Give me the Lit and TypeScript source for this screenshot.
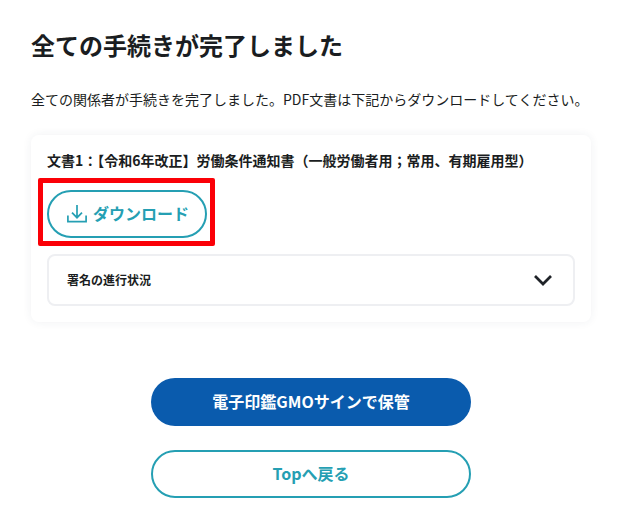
import { LitElement, html, css } from "lit";
import { customElement } from "lit/decorators.js";

@customElement("app-root")
export class AppRoot extends LitElement {
  static styles = css`
    :host {
      display: block;
      width: 619px;
      height: 513px;
      overflow: hidden;
      background: #fff;
      color: #1a1d21;
      font-family: "Noto Sans CJK JP", "Noto Sans", sans-serif;
    }
    .page {
      display: flex;
      flex-direction: column;
      padding: 27px 28px 0 31px;
    }
    h1 {
      margin: 0;
      font-size: 24px;
      font-weight: 700;
      line-height: 36px;
    }
    .lead {
      margin: 26px 0 0;
      font-size: 14px;
      line-height: 20px;
      white-space: nowrap;
    }
    .card {
      position: relative;
      margin-top: 26px;
      padding: 15px 16px 16px;
      border-radius: 8px;
      background: #fff;
      box-shadow: 0 0 10px rgba(40, 50, 90, 0.07);
      display: flex;
      flex-direction: column;
      align-items: flex-start;
    }
    .doc {
      margin: 0;
      font-size: 14px;
      font-weight: 700;
      line-height: 20px;
      white-space: nowrap;
    }
    .btn {
      box-sizing: border-box;
      display: flex;
      align-items: center;
      justify-content: center;
      border-radius: 24px;
      font-size: 16px;
      font-weight: 700;
      height: 48px;
      font-family: inherit;
    }
    .btn span,
    .acc span {
      padding-bottom: 2px;
    }
    .outline {
      border: 2px solid #259fb3;
      color: #259fb3;
      background: #fff;
    }
    .dl {
      width: 160px;
      margin-top: 20px;
      gap: 6px;
      padding-left: 2px;
    }
    .dl svg {
      width: 20px;
      height: 20px;
      display: block;
    }
    .mark {
      position: absolute;
      left: 7px;
      top: 43px;
      width: 177px;
      height: 68px;
      box-sizing: border-box;
      border: 5px solid #fb0007;
      border-radius: 2px;
    }
    .acc {
      box-sizing: border-box;
      align-self: stretch;
      margin-top: 16px;
      height: 52px;
      border: 2px solid #eeeff2;
      border-radius: 8px;
      display: flex;
      align-items: center;
      justify-content: space-between;
      padding: 0 20px 0 18px;
      font-size: 12px;
      font-weight: 700;
    }
    .acc svg {
      width: 20px;
      height: 12px;
      display: block;
    }
    .actions {
      display: flex;
      flex-direction: column;
      align-items: center;
      gap: 24px;
      margin-top: 56px;
    }
    .actions .btn {
      width: 320px;
    }
    .primary {
      background: #0a5bad;
      color: #fff;
    }
  `;

  render() {
    return html`
      <div class="page">
        <h1>全ての手続きが完了しました</h1>
        <p class="lead">全ての関係者が手続きを完了しました。PDF文書は下記からダウンロードしてください。</p>
        <section class="card">
          <p class="doc">文書1：【令和6年改正】労働条件通知書（一般労働者用；常用、有期雇用型）</p>
          <div class="btn outline dl">
            <svg viewBox="0 0 20 20" fill="none" stroke="currentColor" stroke-width="1.7">
              <path d="M0.9 11.5v6.2h18.2v-6.2" />
              <path d="M10 1v12.5M5 8.7l5 5 5-5" />
            </svg>
            <span>ダウンロード</span>
          </div>
          <div class="acc">
            <span>署名の進行状況</span>
            <svg viewBox="0 0 20 12" fill="none" stroke="#1f2328" stroke-width="2.7">
              <path d="M2 2l8 8 8-8" />
            </svg>
          </div>
          <div class="mark"></div>
        </section>
        <div class="actions">
          <div class="btn primary"><span>電子印鑑GMOサインで保管</span></div>
          <div class="btn outline"><span>Topへ戻る</span></div>
        </div>
      </div>
    `;
  }
}
